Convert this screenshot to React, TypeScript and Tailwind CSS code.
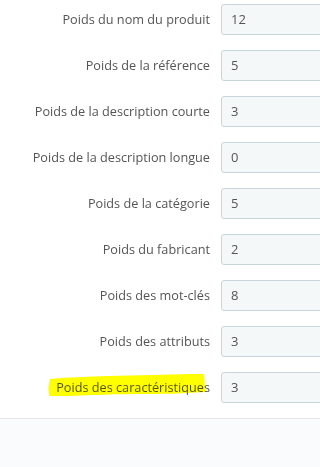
const rows: { label: string; value: string; mark?: boolean }[] = [
  { label: 'Poids du nom du produit', value: '12' },
  { label: 'Poids de la référence', value: '5' },
  { label: 'Poids de la description courte', value: '3' },
  { label: 'Poids de la description longue', value: '0' },
  { label: 'Poids de la catégorie', value: '5' },
  { label: 'Poids du fabricant', value: '2' },
  { label: 'Poids des mot-clés', value: '8' },
  { label: 'Poids des attributs', value: '3' },
  { label: 'Poids des caractéristiques', value: '3', mark: true },
];

// hand-drawn marker stroke behind the last label
function Highlight() {
  return (
    <svg
      className="absolute left-[-8px] top-[-4px] w-[158px] h-[23px] mix-blend-multiply pointer-events-none"
      viewBox="0 0 158 23"
    >
      <path
        d="M2 5 C20 3 40 3 60 2 C90 1 120 1 140 0 L156 0 L157 18 C140 19 120 20 100 20 C70 20 40 21 20 22 L1 22 C0 16 0 10 2 5 Z"
        fill="#ffff00"
      />
    </svg>
  );
}

export default function App() {
  return (
    <div className="w-[320px] h-[467px] overflow-hidden bg-white font-['Open_Sans',sans-serif] text-[12.7px] text-[#555]">
      <div className="flex flex-col gap-[15px] pt-[4px] pb-[15px]">
        {rows.map((r) => (
          <div key={r.label} className="flex items-center">
            <div className="w-[210px] shrink-0 text-right">
              <span className="relative inline-block leading-[18px]">
                {r.label}
                {r.mark && <Highlight />}
              </span>
            </div>
            <div className="ml-[11px] w-[130px] shrink-0 h-[31px] rounded-[3px] border border-[#c7d6db] bg-[#f5f8f9] px-[9px] flex items-center text-[13px] text-[#555]">
              {r.value}
            </div>
          </div>
        ))}
      </div>
      <div className="border-t border-[#e6e6e6] bg-[#fafbfc] h-full" />
    </div>
  );
}
